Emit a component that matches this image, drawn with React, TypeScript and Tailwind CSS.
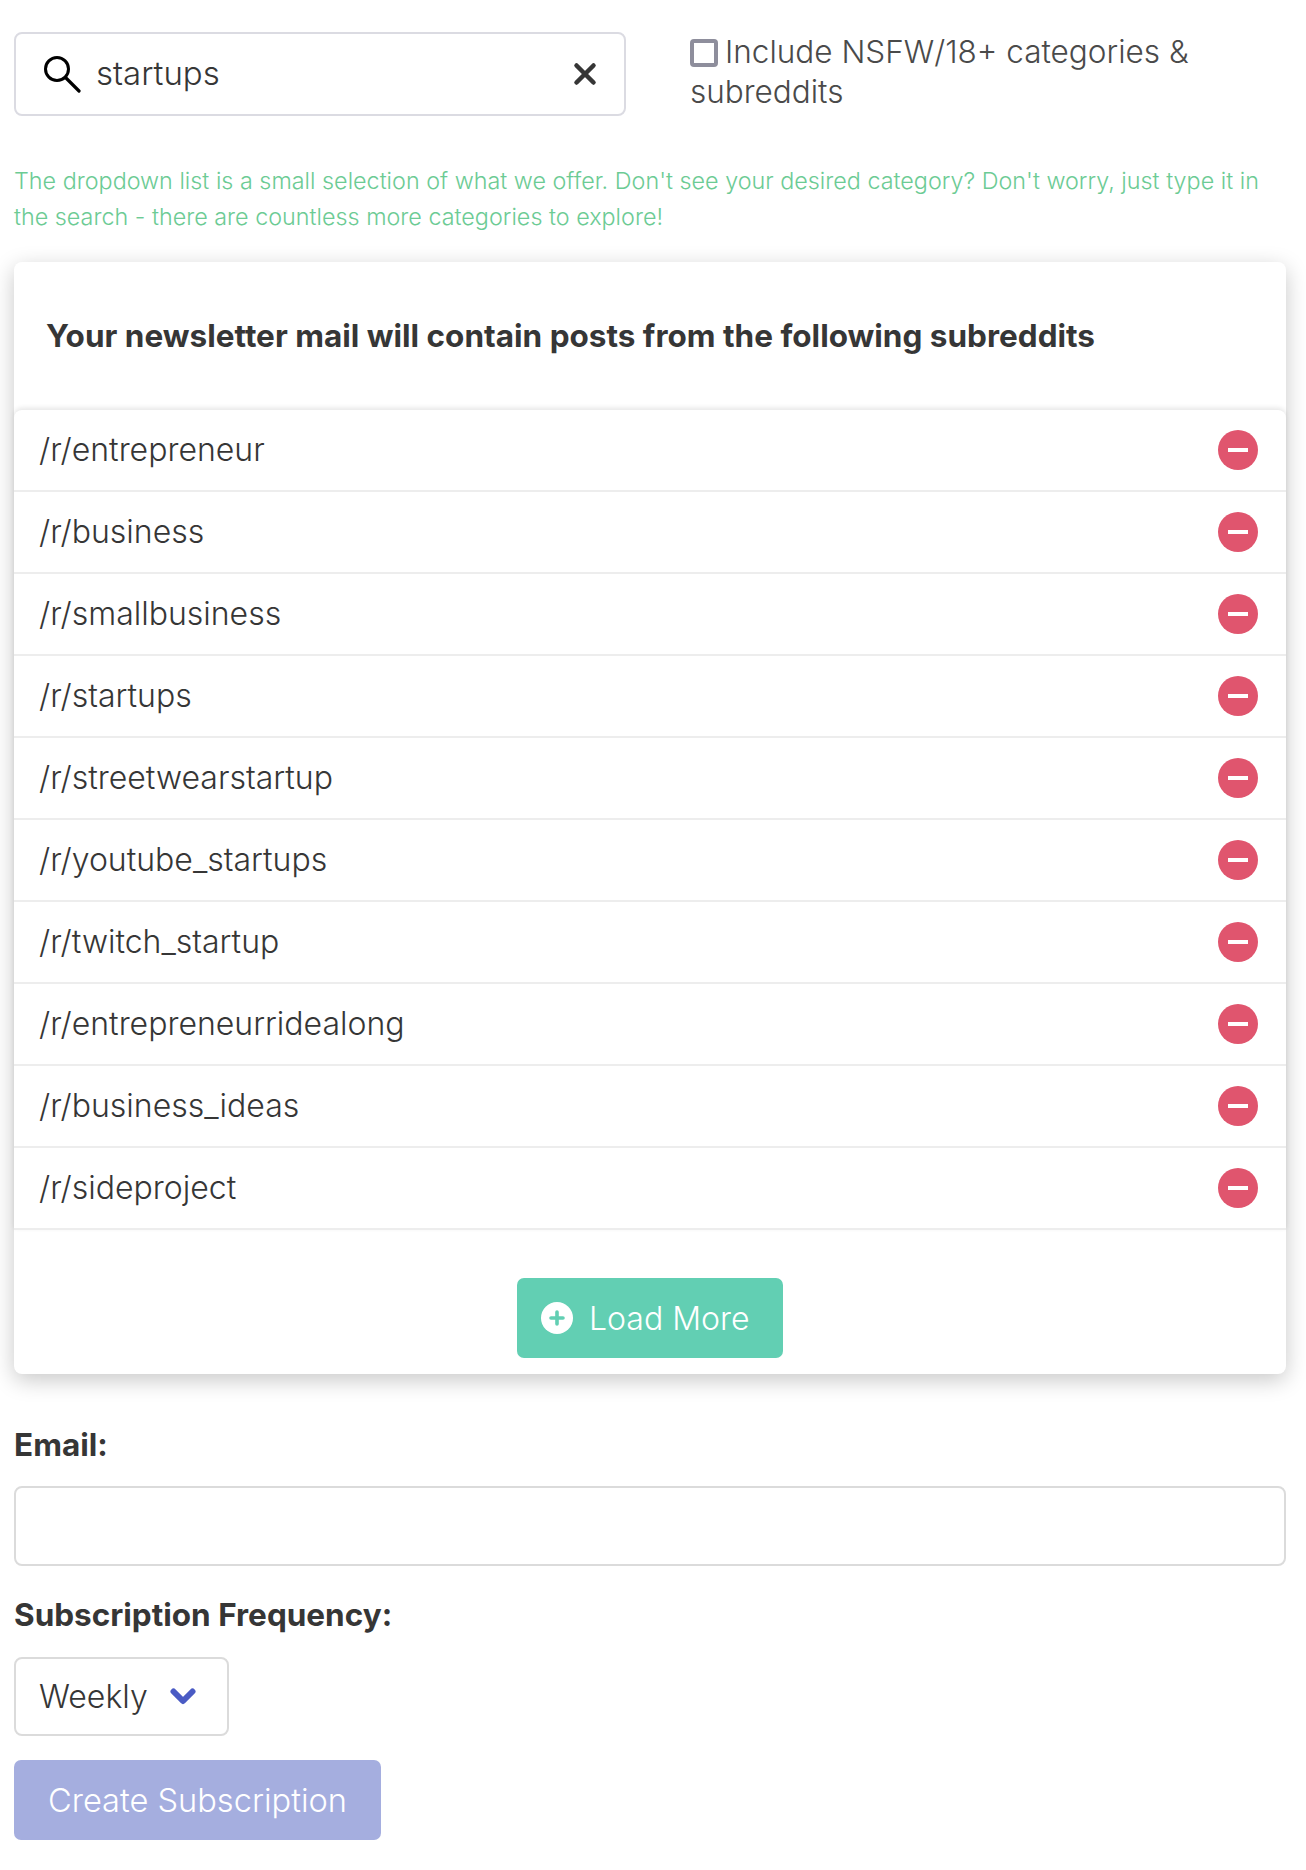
import { X } from "lucide-react";

const subreddits = [
  "entrepreneur",
  "business",
  "smallbusiness",
  "startups",
  "streetwearstartup",
  "youtube_startups",
  "twitch_startup",
  "entrepreneurridealong",
  "business_ideas",
  "sideproject",
];

export default function App() {
  return (
    <div className="min-h-[1870px] bg-white pl-[14px] pr-[20px] pt-[32px] font-['Inter',sans-serif] font-light text-[#363636]">
      {/* Search + NSFW toggle */}
      <div className="flex">
        <div className="flex h-[84px] w-[612px] items-center rounded-[8px] border-2 border-[#dbdbe2] pl-[28px] pr-[22px]">
          <svg viewBox="0 0 37 37" className="h-[37px] w-[37px] shrink-0">
            <circle cx="13" cy="13" r="11.5" fill="none" stroke="#000" strokeWidth="3" />
            <path d="M21.5 21.5L35 35" stroke="#000" strokeWidth="3.2" strokeLinecap="round" />
          </svg>
          <span className="ml-[15px] flex-1 text-[33px]">startups</span>
          <X className="h-[34px] w-[34px]" strokeWidth={3.2} />
        </div>
        <div className="ml-[64px] w-[530px] text-[31.5px] leading-[40px] text-[#4a4a4a]">
          <span className="mr-[7px] inline-block h-[28px] w-[28px] rounded-[4px] border-[4px] border-[#8e8e9c] align-[-4px]" />
          Include NSFW/18+ categories &amp; subreddits
        </div>
      </div>

      <p className="mt-[47px] text-[23.35px] leading-[36px] text-[#6ccb94]">
        The dropdown list is a small selection of what we offer. Don't see your desired category? Don't worry, just type it in the search - there are countless more categories to explore!
      </p>

      {/* Subreddit card */}
      <div className="mt-[27px] rounded-[8px] bg-white shadow-[0_6px_22px_rgba(0,0,0,0.22)]">
        <div className="flex h-[148px] items-center rounded-t-[8px] px-[32px]">
          <h2 className="text-[31.5px] font-bold">Your newsletter mail will contain posts from the following subreddits</h2>
        </div>
        <ul className="rounded-t-[8px] bg-white shadow-[0_-2px_5px_rgba(0,0,0,0.1)]">
          {subreddits.map((name) => (
            <li key={name} className="flex h-[82px] items-center justify-between border-b-2 border-[#ededed] pl-[25px] pr-[28px]">
              <span className="text-[32px]">/r/{name}</span>
              <span className="flex h-[40px] w-[40px] items-center justify-center rounded-full bg-[#e0556e]">
                <span className="h-[4px] w-[20px] bg-white" />
              </span>
            </li>
          ))}
        </ul>
        <div className="flex justify-center pb-[16px] pt-[48px]">
          <button className="flex h-[80px] w-[266px] items-center rounded-[7px] bg-[#62cfb3] pl-[24px] text-[32px] text-white">
            <svg viewBox="0 0 32 32" className="h-[32px] w-[32px]">
              <circle cx="16" cy="16" r="16" fill="#fff" />
              <path d="M16 10v12M10 16h12" stroke="#62cfb3" strokeWidth="3.6" strokeLinecap="round" />
            </svg>
            <span className="ml-[16px] translate-y-[1px]">Load More</span>
          </button>
        </div>
      </div>

      {/* Form */}
      <label className="mt-[53px] block text-[31.5px] font-bold leading-[36px]">Email:</label>
      <div className="mt-[23px] h-[80px] rounded-[8px] border-2 border-[#dbdbdb]" />
      <label className="mt-[31px] block text-[31.5px] font-bold leading-[36px]">Subscription Frequency:</label>
      <div className="mt-[24px] flex h-[79px] w-[215px] items-center rounded-[8px] border-2 border-[#dbdbdb] pl-[23px] text-[32px]">
        Weekly
        <svg viewBox="0 0 26 17" className="ml-[22px] h-[17px] w-[26px]">
          <path d="M3.5 3.5L13 13l9.5-9.5" fill="none" stroke="#4a5bc4" strokeWidth="6" strokeLinecap="round" strokeLinejoin="round" />
        </svg>
      </div>
      <button className="mt-[24px] block h-[80px] w-[367px] rounded-[7px] bg-[#a5aedf] text-[32.6px] text-white">Create Subscription</button>
    </div>
  );
}
